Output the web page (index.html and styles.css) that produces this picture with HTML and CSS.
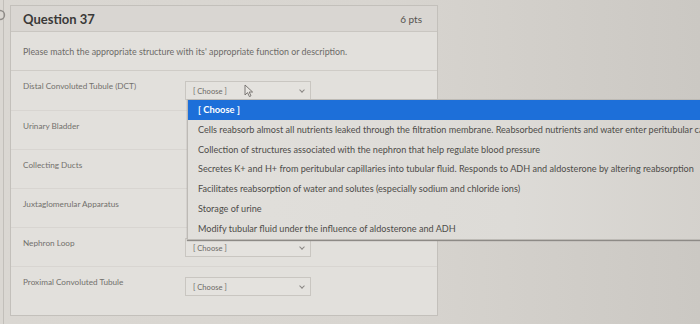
FILE: index.html
```html
<!DOCTYPE html>
<html lang="en">
<head>
    <meta charset="UTF-8">
    <meta name="viewport" content="width=device-width, initial-scale=1.0">
    <title>Question 37</title>
    <link rel="stylesheet" href="styles.css">
</head>
<body>
    <div class="page">
        <svg class="flag" width="12" height="12" viewBox="0 0 12 12"><circle cx="6" cy="6" r="4.5" fill="none" stroke="#8f8c88" stroke-width="1.4"/></svg>
        <div class="question">
            <div class="q-header">
                <span class="q-title">Question 37</span>
                <span class="q-pts">6 pts</span>
            </div>
            <div class="q-text">Please match the appropriate structure with its' appropriate function or description.</div>
            <div class="answers">
                <div class="row">
                    <span class="label">Distal Convoluted Tubule (DCT)</span>
                    <div class="select">[ Choose ]<span class="chev"></span></div>
                </div>
                <div class="row">
                    <span class="label">Urinary Bladder</span>
                </div>
                <div class="row">
                    <span class="label">Collecting Ducts</span>
                </div>
                <div class="row">
                    <span class="label">Juxtaglomerular Apparatus</span>
                </div>
                <div class="row">
                    <span class="label">Nephron Loop</span>
                    <div class="select">[ Choose ]<span class="chev"></span></div>
                </div>
                <div class="row">
                    <span class="label">Proximal Convoluted Tubule</span>
                    <div class="select">[ Choose ]<span class="chev"></span></div>
                </div>
            </div>
        </div>

        <!-- open dropdown of the first select -->
        <ul class="dropdown">
            <li class="active">[ Choose ]</li>
            <li>Cells reabsorb almost all nutrients leaked through the filtration membrane. Reabsorbed nutrients and water enter peritubular capillaries</li>
            <li>Collection of structures associated with the nephron that help regulate blood pressure</li>
            <li>Secretes K+ and H+ from peritubular capillaries into tubular fluid. Responds to ADH and aldosterone by altering reabsorption</li>
            <li>Facilitates reabsorption of water and solutes (especially sodium and chloride ions)</li>
            <li>Storage of urine</li>
            <li>Modify tubular fluid under the influence of aldosterone and ADH</li>
        </ul>

        <svg class="cursor" width="10" height="14" viewBox="0 0 10 14"><path d="M1 1 L1 11 L3.5 8.6 L5.4 12.6 L7 11.8 L5.2 8 L8.6 8 Z" fill="#e8e6e2" stroke="#6f6c69" stroke-width="0.9" stroke-linejoin="round"/></svg>
    </div>
</body>
</html>
```

FILE: styles.css
```css
body {
    margin: 0;
    padding: 0;
    font-family: Lato, "Open Sans", sans-serif;
    background: linear-gradient(90deg, #dad7d2 0%, #d8d5d0 55%, #cbc8c3 100%);
    overflow: hidden;
}

.page {
    position: relative;
    height: 324px;
    padding: 5px 0 0 10px;
    box-sizing: border-box;
    border-left: 1px solid #c2bfba;
    margin-left: 3px;
}

.flag {
    position: absolute;
    left: -10px;
    top: 9px;
}

.question {
    width: 426px;
    margin-left: -4px;
    border: 1px solid #c3c0bb;
    background: #e2e0dc;
}

.q-header {
    height: 25px;
    display: flex;
    justify-content: space-between;
    align-items: center;
    padding: 0 15px 0 12px;
    background: #d9d6d2;
    border-bottom: 1px solid #c9c6c1;
}

.q-title {
    font-size: 13px;
    font-weight: bold;
    color: #3a3938;
}

.q-pts {
    font-size: 10px;
    color: #55534f;
}

.q-text {
    padding: 14px 12px 13px;
    font-size: 8.9px;
    color: #6d6b68;
}

.answers {
    border-top: 1px solid #cfccc7;
    padding-bottom: 10px;
}

.row {
    height: 39px;
    display: flex;
    align-items: center;
    padding-left: 12px;
    border-top: 1px solid #d8d5d1;
    box-sizing: border-box;
}

.row:first-child {
    border-top: none;
}

.label {
    width: 162px;
    font-size: 8.2px;
    color: #72706c;
    margin-top: -9px;
}

.select {
    position: relative;
    width: 126px;
    height: 19px;
    line-height: 19px;
    padding-left: 7px;
    box-sizing: border-box;
    border: 1px solid #c9c6c1;
    background: #e4e2de;
    font-size: 7.6px;
    color: #6c6a67;
}

.chev {
    position: absolute;
    right: 6px;
    top: 6px;
    width: 3px;
    height: 3px;
    border-right: 1px solid #8a8784;
    border-bottom: 1px solid #8a8784;
    transform: rotate(45deg);
}

.dropdown {
    position: absolute;
    left: 183px;
    top: 99px;
    width: 540px;
    margin: 0;
    padding: 0;
    list-style: none;
    background: linear-gradient(90deg, #e1dfdb 0%, #dddbd7 60%, #d3d0cb 100%);
    border: 1px solid #bdbab5;
    box-shadow: 0 1px 1px #8d8a86;
}

.dropdown li {
    height: 19.8px;
    line-height: 19.8px;
    padding-left: 10px;
    font-size: 9.1px;
    color: #4e4c49;
    white-space: nowrap;
    overflow: hidden;
}

.dropdown li.active {
    background: #1d6fd9;
    color: #fff;
    font-weight: bold;
    font-size: 9.4px;
}

.cursor {
    position: absolute;
    left: 240px;
    top: 84px;
}
```
